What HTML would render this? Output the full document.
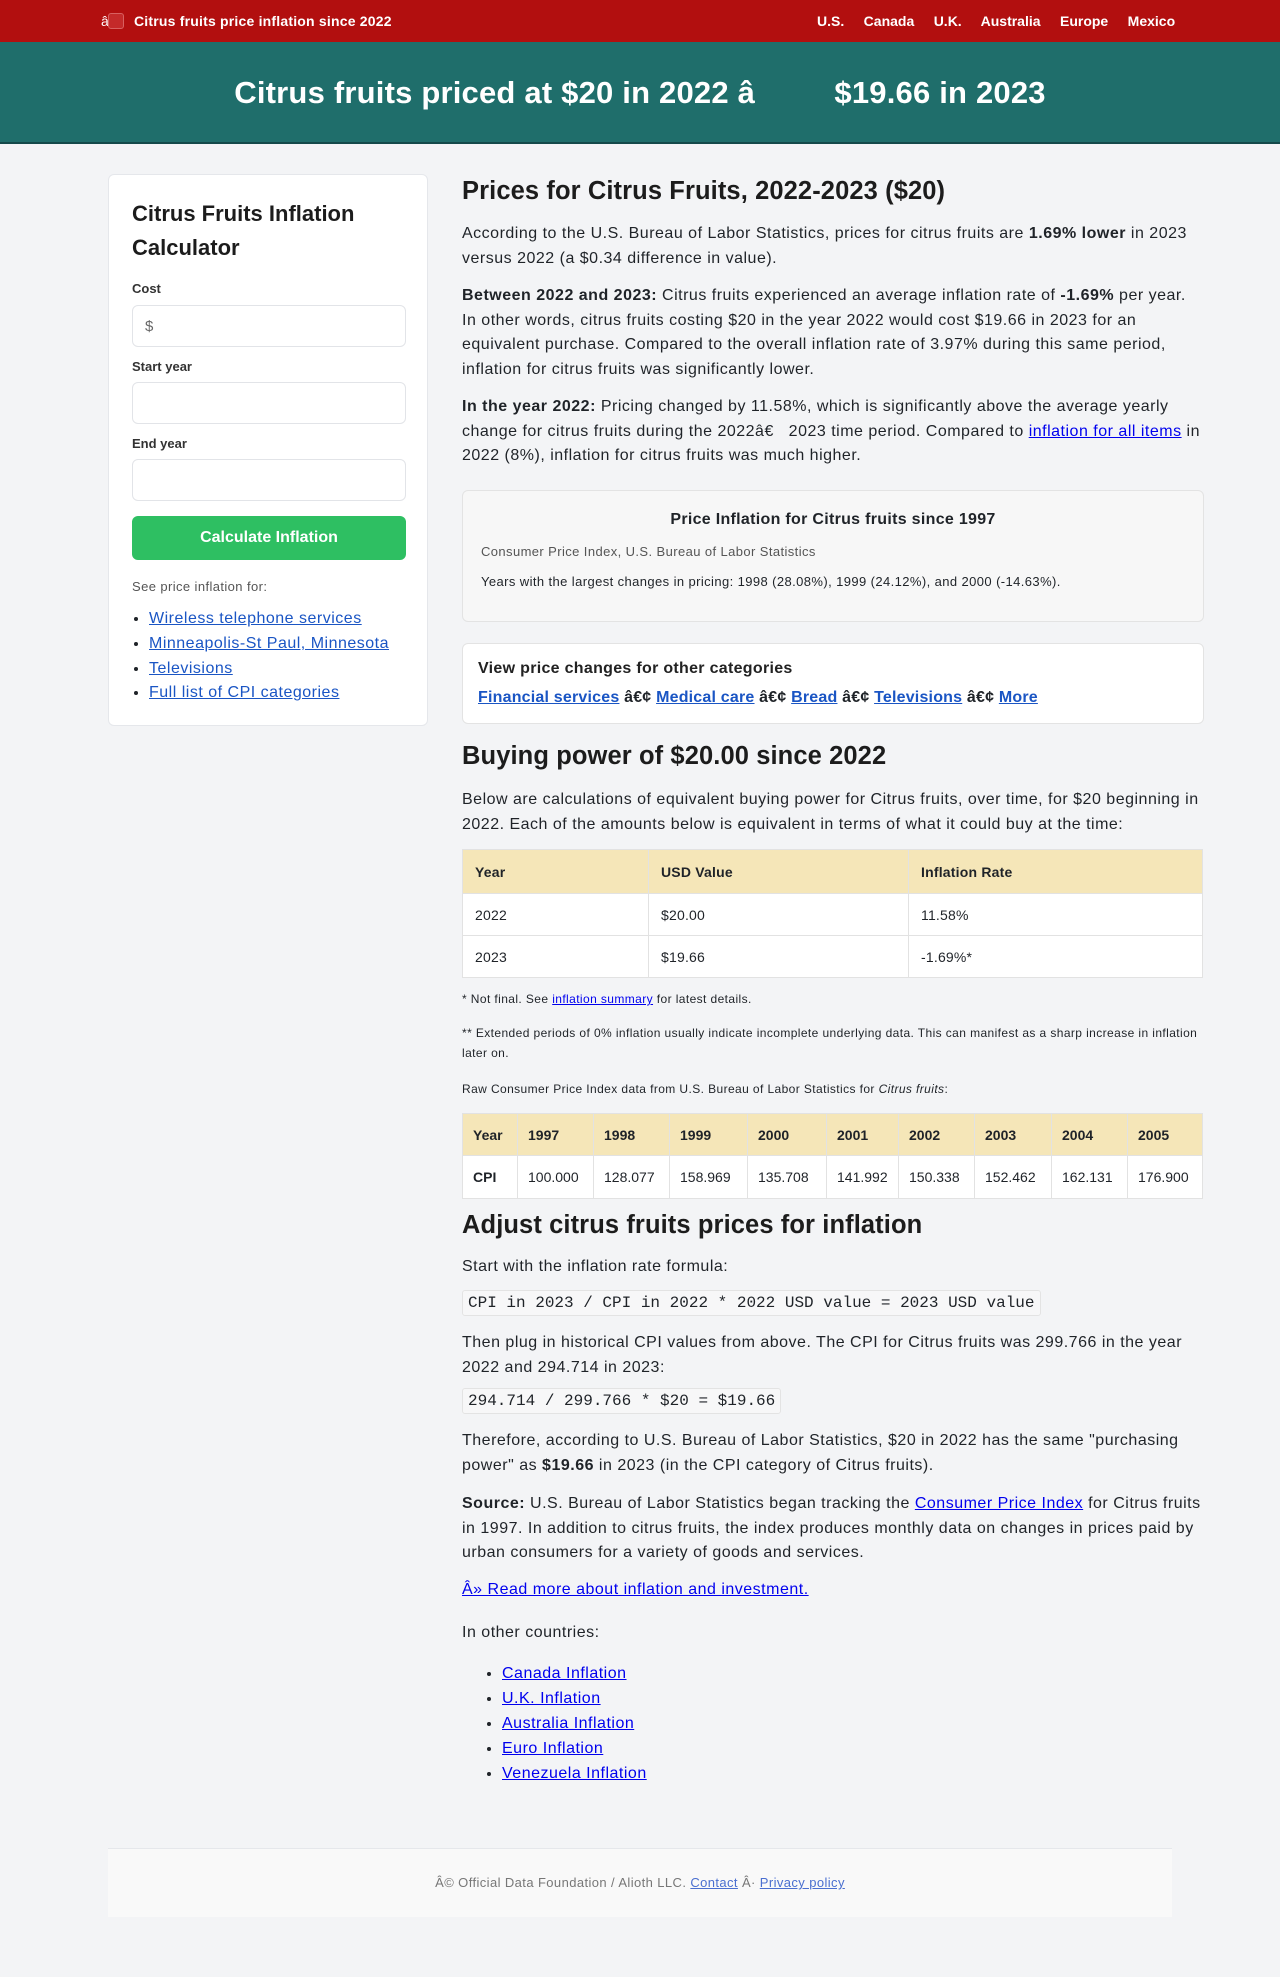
<!DOCTYPE html>
<html><head><meta charset="utf-8"><style>
*{box-sizing:border-box;margin:0;padding:0}
body{width:1280px;height:1977px;background:#f3f4f6;font-family:"Liberation Sans",sans-serif;color:#1f2328;position:relative;overflow:hidden}
.a{position:absolute}
.top{left:0;top:0;width:1280px;height:42px;background:#b20f0f;color:#fff;font-weight:bold;font-size:14px}
.hero{left:0;top:42px;width:1280px;height:102px;background:#1f6e6b;border-bottom:2px solid #14494a;color:#fff;font-weight:bold;font-size:31px;text-align:center;line-height:102px;letter-spacing:0.2px}
.card{left:108px;top:174px;width:320px;height:552px;background:#fff;border:1px solid #e5e7eb;border-radius:6px}
.lbl{font-size:13px;font-weight:bold;color:#333}
.inp{left:23px;width:274px;height:42px;border:1px solid #e2e4e8;border-radius:6px;background:#fff;font-size:15px;color:#666;padding:12px 12px}
a{color:#0000ee}
.sl a{color:#1a55c4}
p,.t{font-size:16px;line-height:24.6px;letter-spacing:0.5px}
.m{left:462px;width:742px}
.s{letter-spacing:0.4px}
h2{font-size:25.5px;font-weight:bold;color:#1c1c1c;letter-spacing:0.1px}
table{border-collapse:collapse;width:741px;background:#fff;table-layout:fixed}
td,th{border:1px solid #e2e2e2;text-align:left;font-size:14px;padding:0 12px;letter-spacing:0.2px;white-space:nowrap;overflow:hidden}
.cpi td,.cpi th{padding:0 10px;letter-spacing:0}
th{background:#f5e6b8;font-weight:bold}
code{font-family:"Liberation Mono",monospace;font-size:16px;background:#f7f7f8;border:1px solid #e3e3e3;border-radius:3px;padding:3px 5px;letter-spacing:0}
ul{padding-left:40px;letter-spacing:0.5px}
</style></head><body>
<div class="a top">
 <span class="a" style="left:101px;top:13px;font-weight:normal">â</span>
 <span class="a" style="left:108px;top:13px;width:16px;height:16px;background:#c42a2a;border:1px solid #d86060;border-radius:3px"></span>
 <span class="a" style="left:134px;top:13px;letter-spacing:0.2px">Citrus fruits price inflation since 2022</span>
 <span class="a" style="left:817px;top:13px;word-spacing:0">U.S.&nbsp;&nbsp;&nbsp;&nbsp; Canada&nbsp;&nbsp;&nbsp;&nbsp; U.K.&nbsp;&nbsp;&nbsp;&nbsp; Australia&nbsp;&nbsp;&nbsp;&nbsp; Europe&nbsp;&nbsp;&nbsp;&nbsp; Mexico</span>
</div>
<div class="a hero">Citrus fruits priced at $20 in 2022 â&nbsp;&nbsp;&nbsp;&nbsp;&nbsp;&nbsp;&nbsp;&nbsp; $19.66 in 2023</div>

<div class="a card">
 <div class="a" style="left:23px;top:22px;font-size:22px;font-weight:bold;line-height:34px;color:#1c1c1c">Citrus Fruits Inflation<br>Calculator</div>
 <div class="a lbl" style="left:23px;top:106px">Cost</div>
 <div class="a inp" style="top:130px">$</div>
 <div class="a lbl" style="left:23px;top:184px">Start year</div>
 <div class="a inp" style="top:207px"></div>
 <div class="a lbl" style="left:23px;top:261px">End year</div>
 <div class="a inp" style="top:284px"></div>
 <div class="a" style="left:23px;top:341px;width:274px;height:44px;background:#2ebf62;border-radius:6px;color:#fff;font-weight:bold;font-size:16px;text-align:center;line-height:44px">Calculate Inflation</div>
 <div class="a s" style="left:23px;top:404px;font-size:13px;color:#555">See price inflation for:</div>
 <ul class="a sl" style="left:0;top:432px;font-size:16px;line-height:24.8px;width:318px;padding-left:40px">
  <li><a href="#">Wireless telephone services</a></li>
  <li><a href="#">Minneapolis-St Paul, Minnesota</a></li>
  <li><a href="#">Televisions</a></li>
  <li><a href="#">Full list of CPI categories</a></li>
 </ul>
</div>

<h2 class="a m" style="top:177px">Prices for Citrus Fruits, 2022-2023 ($20)</h2>
<p class="a m" style="top:222px">According to the U.S. Bureau of Labor Statistics, prices for citrus fruits are <b>1.69% lower</b> in 2023 versus 2022 (a $0.34 difference in value).</p>
<p class="a m" style="top:284px"><b>Between 2022 and 2023:</b> Citrus fruits experienced an average inflation rate of <b>-1.69%</b> per year. In other words, citrus fruits costing $20 in the year 2022 would cost $19.66 in 2023 for an equivalent purchase. Compared to the overall inflation rate of 3.97% during this same period, inflation for citrus fruits was significantly lower.</p>
<p class="a m" style="top:395px"><b>In the year 2022:</b> Pricing changed by 11.58%, which is significantly above the average yearly change for citrus fruits during the 2022â€&nbsp;&nbsp; 2023 time period. Compared to <a href="#">inflation for all items</a> in 2022 (8%), inflation for citrus fruits was much higher.</p>

<div class="a m" style="top:490px;height:132px;background:#f7f7f7;border:1px solid #e3e3e3;border-radius:6px">
 <div class="a" style="left:0;width:740px;top:20px;text-align:center;font-weight:bold;font-size:16px;letter-spacing:0.3px">Price Inflation for Citrus fruits since 1997</div>
 <div class="a s" style="left:18px;top:53px;font-size:13px;color:#555">Consumer Price Index, U.S. Bureau of Labor Statistics</div>
 <div class="a s" style="left:18px;top:83px;font-size:13px">Years with the largest changes in pricing: 1998 (28.08%), 1999 (24.12%), and 2000 (-14.63%).</div>
</div>
<div class="a m" style="top:643px;height:81px;background:#fff;border:1px solid #e3e3e3;border-radius:6px">
 <div class="a" style="left:15px;top:16px;font-size:16px;font-weight:bold;color:#222;letter-spacing:0.3px">View price changes for other categories</div>
 <div class="a sl" style="left:15px;top:45px;font-size:16px;font-weight:bold;letter-spacing:0.2px"><a href="#">Financial services</a> â€¢ <a href="#">Medical care</a> â€¢ <a href="#">Bread</a> â€¢ <a href="#">Televisions</a> â€¢ <a href="#">More</a></div>
</div>

<h2 class="a m" style="top:742px">Buying power of $20.00 since 2022</h2>
<p class="a m" style="top:788px">Below are calculations of equivalent buying power for Citrus fruits, over time, for $20 beginning in 2022. Each of the amounts below is equivalent in terms of what it could buy at the time:</p>
<table class="a" style="left:462px;top:849px">
<colgroup><col style="width:186px"><col style="width:260px"><col></colgroup>
<tr style="height:44px"><th>Year</th><th>USD Value</th><th>Inflation Rate</th></tr>
<tr style="height:42px"><td>2022</td><td>$20.00</td><td>11.58%</td></tr>
<tr style="height:42px"><td>2023</td><td>$19.66</td><td>-1.69%*</td></tr>
</table>
<div class="a m s" style="top:992px;font-size:12px">* Not final. See <a href="#">inflation summary</a> for latest details.</div>
<div class="a m s" style="top:1023px;font-size:12px;line-height:20px">** Extended periods of 0% inflation usually indicate incomplete underlying data. This can manifest as a sharp increase in inflation later on.</div>
<div class="a m s" style="top:1082px;font-size:12px">Raw Consumer Price Index data from U.S. Bureau of Labor Statistics for <i>Citrus fruits</i>:</div>
<table class="a cpi" style="left:462px;top:1113px">
<colgroup><col style="width:55px"><col style="width:76px"><col style="width:76px"><col style="width:78px"><col style="width:79px"><col style="width:72px"><col style="width:76px"><col style="width:77px"><col style="width:76px"><col></colgroup>
<tr style="height:42px"><th>Year</th><th>1997</th><th>1998</th><th>1999</th><th>2000</th><th>2001</th><th>2002</th><th>2003</th><th>2004</th><th>2005</th></tr>
<tr style="height:43px"><td><b>CPI</b></td><td>100.000</td><td>128.077</td><td>158.969</td><td>135.708</td><td>141.992</td><td>150.338</td><td>152.462</td><td>162.131</td><td>176.900</td></tr>
</table>

<h2 class="a m" style="top:1211px">Adjust citrus fruits prices for inflation</h2>
<p class="a m" style="top:1255px">Start with the inflation rate formula:</p>
<div class="a m" style="top:1294px"><code>CPI in 2023 / CPI in 2022 * 2022 USD value = 2023 USD value</code></div>
<p class="a m" style="top:1331px">Then plug in historical CPI values from above. The CPI for Citrus fruits was 299.766 in the year 2022 and 294.714 in 2023:</p>
<div class="a m" style="top:1392px"><code>294.714 / 299.766 * $20 = $19.66</code></div>
<p class="a m" style="top:1429px">Therefore, according to U.S. Bureau of Labor Statistics, $20 in 2022 has the same "purchasing power" as <b>$19.66</b> in 2023 (in the CPI category of Citrus fruits).</p>
<p class="a m" style="top:1492px"><b>Source:</b> U.S. Bureau of Labor Statistics began tracking the <a href="#">Consumer Price Index</a> for Citrus fruits in 1997. In addition to citrus fruits, the index produces monthly data on changes in prices paid by urban consumers for a variety of goods and services.</p>
<p class="a m" style="top:1578px"><a href="#">Â» Read more about inflation and investment.</a></p>
<p class="a m" style="top:1621px">In other countries:</p>
<ul class="a m" style="top:1661px;font-size:16px;line-height:25px">
<li><a href="#">Canada Inflation</a></li>
<li><a href="#">U.K. Inflation</a></li>
<li><a href="#">Australia Inflation</a></li>
<li><a href="#">Euro Inflation</a></li>
<li><a href="#">Venezuela Inflation</a></li>
</ul>

<div class="a s" style="left:108px;top:1848px;width:1064px;height:69px;background:#f9f9f9;border-top:1px solid #e5e7eb;text-align:center;line-height:67px;font-size:13px;color:#777">Â© Official Data Foundation / Alioth LLC. <a href="#" style="color:#4a6fd0">Contact</a> Â· <a href="#" style="color:#4a6fd0">Privacy policy</a></div>
</body></html>
